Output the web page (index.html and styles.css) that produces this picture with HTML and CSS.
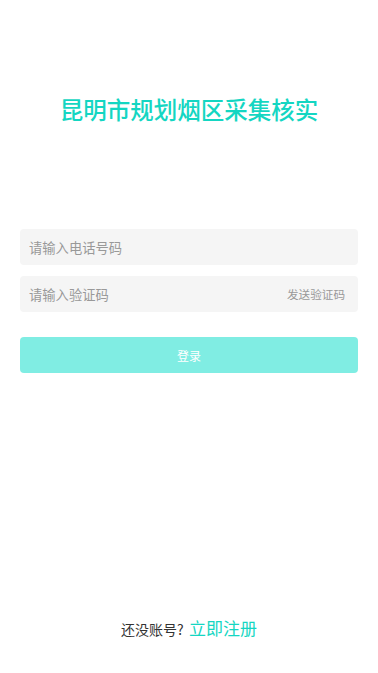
FILE: index.html
```html
<!DOCTYPE html>
<html lang="zh">
<head>
    <meta charset="UTF-8">
    <meta name="viewport" content="width=device-width, initial-scale=1.0">
    <title>昆明市规划烟区采集核实</title>
    <link rel="stylesheet" href="styles.css">
</head>
<body>
    <div class="login-page">
        <h1 class="title">昆明市规划烟区采集核实</h1>

        <div class="login-form">
            <div class="field">
                <input type="text" placeholder="请输入电话号码">
            </div>
            <div class="field">
                <input type="text" placeholder="请输入验证码">
                <span class="send-code">发送验证码</span>
            </div>
            <button class="login-btn">登录</button>
        </div>

        <div class="register">
            <span>还没账号?</span>
            <a href="#" class="register-link">立即注册</a>
        </div>
    </div>
</body>
</html>
```

FILE: styles.css
```css
body {
    margin: 0;
    padding: 0;
    background: #fff;
    font-family: "Noto Sans CJK SC", "Noto Sans", sans-serif;
}

.login-page {
    height: 673px;
    padding: 0 20px;
    box-sizing: border-box;
    display: flex;
    flex-direction: column;
}

.title {
    margin: 91px 0 0;
    text-align: center;
    font-size: 23.5px;
    font-weight: 500;
    line-height: 36px;
    color: #14d6c2;
}

.login-form {
    margin-top: 102px;
}

.field {
    height: 36px;
    background-color: #f5f5f5;
    border-radius: 4px;
    display: flex;
    align-items: center;
    padding: 0 13px 0 9px;
    margin-bottom: 11px;
}

.field input {
    flex: 1;
    min-width: 0;
    border: none;
    outline: none;
    background: transparent;
    padding: 0;
    font-family: inherit;
    font-size: 13.3px;
    color: #333;
}

.field input::placeholder {
    color: #999;
}

.send-code {
    font-size: 11.6px;
    color: #999;
}

.login-btn {
    display: block;
    width: 100%;
    height: 36px;
    margin-top: 25px;
    border: none;
    border-radius: 4px;
    background-color: #80ede3;
    color: #fff;
    font-family: inherit;
    font-size: 12px;
}

.register {
    margin-top: auto;
    margin-bottom: 33px;
    text-align: center;
    font-size: 14px;
    color: #333;
}

.register-link {
    font-size: 17px;
    color: #14d6c2;
    text-decoration: none;
    margin-left: 2px;
}
```
